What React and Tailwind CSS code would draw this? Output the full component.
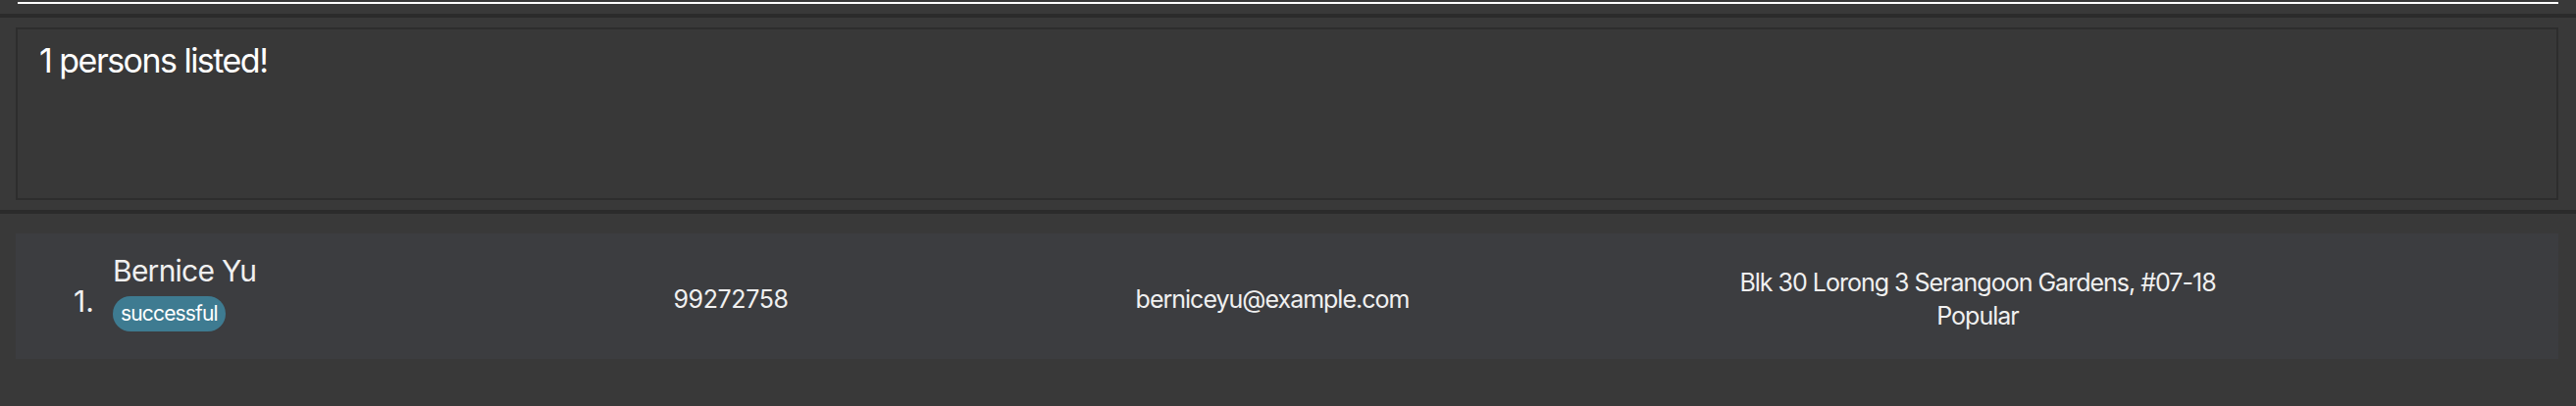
import React from "react";

const PERSON = {
  index: 1,
  name: "Bernice Yu",
  tags: ["successful"],
  phone: "99272758",
  email: "berniceyu@example.com",
  address: "Blk 30 Lorong 3 Serangoon Gardens, #07-18",
  extra: "Popular",
};

function PersonCard({ p }) {
  return (
    <div className="h-[128px] bg-[#3c3d40] flex items-center text-[#f0f0f0]">
      <div className="w-[584px] flex items-center pl-[59px]">
        <span className="w-[40px] text-[30px] leading-[30px] pt-[10px]">{p.index}.</span>
        <div className="flex flex-col pb-[8px]">
          <span className="text-[30px] leading-[36px] tracking-[-0.025em]">{p.name}</span>
          <div className="flex gap-2 mt-[8px]">
            {p.tags.map((t) => (
              <span
                key={t}
                className="h-[36px] px-[8px] rounded-full bg-[#3e7b91] text-white text-[21px] leading-[36px] tracking-[-0.04em]"
              >
                {t}
              </span>
            ))}
          </div>
        </div>
      </div>
      <div className="w-[290px] text-center text-[25px] leading-[34px] pt-[6px] tracking-[-0.015em]">{p.phone}</div>
      <div className="w-[814px] text-center text-[25px] leading-[34px] pt-[6px] tracking-[-0.04em]">{p.email}</div>
      <div className="w-[624px] text-center text-[25px] leading-[34px] pt-[6px] tracking-[-0.04em]">
        <div>{p.address}</div>
        <div>{p.extra}</div>
      </div>
    </div>
  );
}

export default function App() {
  return (
    <div className="w-[2626px] h-[414px] bg-[#393939] flex flex-col font-['Inter',sans-serif]">
      <div className="h-[14px] pt-[2px] pl-[18px] pr-[18px]">
        <div className="h-[2px] bg-white" />
      </div>
      <div className="h-[4px] bg-[#2b2b2b]" />
      <div className="h-[196px] pl-[16px] pr-[18px] py-[10px]">
        <div className="h-full border-2 border-[#2d2d2d] bg-[#383838] pl-[22px] pt-[12px]">
          <span className="text-white text-[34px] leading-[40px] tracking-[-0.045em]">1 persons listed!</span>
        </div>
      </div>
      <div className="h-[4px] bg-[#2b2b2b]" />
      <div className="flex-1 pt-[20px] pl-[16px] pr-[18px]">
        <PersonCard p={PERSON} />
      </div>
    </div>
  );
}
